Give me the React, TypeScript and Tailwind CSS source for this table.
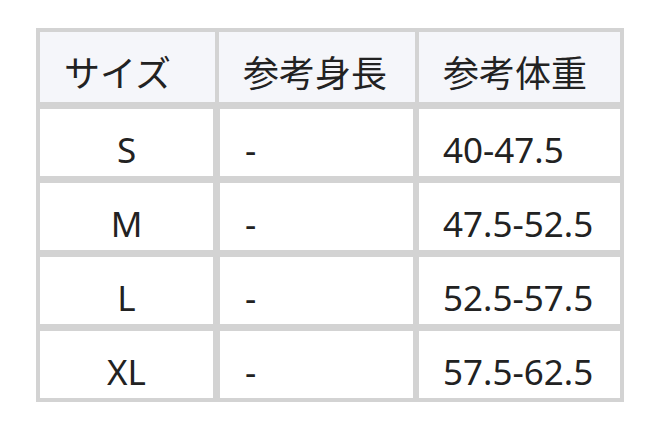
import React from "react";

const font = { fontFamily: '"Noto Sans", "Noto Sans CJK JP", sans-serif' };

const rows = [
  ["S", "-", "40-47.5"],
  ["M", "-", "47.5-52.5"],
  ["L", "-", "52.5-57.5"],
  ["XL", "-", "57.5-62.5"],
];

export default function App() {
  return (
    <div
      className="w-[659px] h-[429px] bg-white pt-[28px] pl-[36px] text-[#222222] text-[35px] leading-[40px]"
      style={font}
    >
      <div className="w-[588px] bg-[#d3d3d3] p-[4px] flex flex-col gap-[7px]">
        <div className="flex gap-[4px] h-[70px] text-[36px]">
          <div className="w-[175px] bg-[#f5f6fa] flex items-center pl-[24px] pt-[14px]">サイズ</div>
          <div className="w-[196px] bg-[#f5f6fa] flex items-center pl-[24px] pt-[14px]">参考身長</div>
          <div className="flex-1 bg-[#f5f6fa] flex items-center pl-[24px] pt-[14px]">参考体重</div>
        </div>
        {rows.map((r) => (
          <div key={r[0]} className="flex h-[67px]">
            <div className="w-[173px] bg-white flex items-center justify-center pt-[14px]">{r[0]}</div>
            <div className="w-[193px] ml-[7px] bg-white flex items-center pl-[25px] pt-[14px]">{r[1]}</div>
            <div className="flex-1 ml-[6px] bg-white flex items-center pl-[24px] pt-[14px]">{r[2]}</div>
          </div>
        ))}
      </div>
    </div>
  );
}
